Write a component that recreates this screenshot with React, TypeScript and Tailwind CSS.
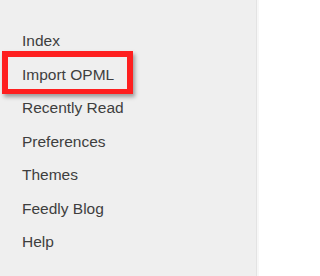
const items = ["Index", "Import OPML", "Recently Read", "Preferences", "Themes", "Feedly Blog", "Help"];

export default function App() {
  return (
    <div className="flex h-[276px] w-[259px] bg-[#f7f7f7]">
      <div className="relative h-full w-[257px] border-r border-[#e3e3e3] bg-[#efefef]">
        <ul className="pt-[24px] pl-[22px] font-['Liberation_Sans',Arial,sans-serif] text-[15.5px] leading-[33.5px] text-[#3e3e3e]">
          {items.map((item) => (
            <li key={item}>{item}</li>
          ))}
        </ul>
        {/* highlight around Import OPML */}
        <div className="absolute left-[2px] top-[51px] h-[43px] w-[131px] border-[6px] border-b-[5px] border-[#fe1f1f] shadow-[2px_3px_4px_rgba(0,0,0,0.35)]" />
      </div>
    </div>
  );
}
